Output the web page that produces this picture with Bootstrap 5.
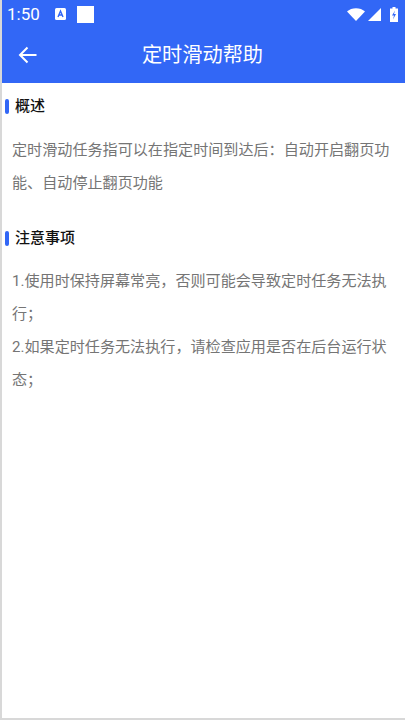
<!DOCTYPE html>
<html lang="zh">
<head>
<meta charset="utf-8">
<title>定时滑动帮助</title>
<link href="https://cdn.jsdelivr.net/npm/bootstrap@5.3.0/dist/css/bootstrap.min.css" rel="stylesheet">
<style>
html,body{height:720px;overflow:hidden}
body{background:#fff;font-family:Roboto,"Noto Sans CJK SC",sans-serif;border-left:2px solid #d8d8d8;border-bottom:2px solid #d8d8d8}
.appbar{background:#3267f6;height:83px;color:#fff}
.statusrow{height:28px;padding:0 7px 0 5px;font-size:17px;line-height:28px}
.status-a{margin-left:15px}
.status-box{margin-left:11px}
.status-wifi{margin-right:3px}
.status-signal{margin-right:9px}
.titlerow{height:54px}
.back-arrow{margin-left:16px}
.pagetitle{font-size:20.2px;font-weight:400;line-height:54px;margin:0 0 0 -37px;text-align:center}
.sec-head{font-size:15px;font-weight:500;color:#111;line-height:22px;padding-left:3px}
.sec-bar{width:4px;height:15px;background:#3267f6;border-radius:2px;margin-right:6px}
.sec-one{margin-top:12px}
.sec-two{margin-top:28px}
.bodytext{font-size:15.1px;line-height:32.7px;color:#757575;padding:0 10px;margin:0}
.firsttext{margin-top:17px}
.secondtext{margin-top:16px}
</style>
</head>
<body>
<header class="appbar">
  <div class="statusrow d-flex align-items-center">
    <span>1:50</span>
    <svg class="status-a" width="11" height="12" viewBox="0 0 11 12"><rect width="11" height="12" rx="1.5" fill="#fff"/><path d="M3 9 5.5 3 8 9M4 7h3" stroke="#3267f6" stroke-width="1.4" fill="none"/></svg>
    <svg class="status-box" width="17" height="17" viewBox="0 0 17 17"><rect width="17" height="17" fill="#fff"/></svg>
    <svg class="status-wifi ms-auto" width="18" height="13" viewBox="0 0 18 13"><path d="M0 3.500C4.500-1 13.500-1 18 3.500L9 13Z" fill="#fff"/></svg>
    <svg class="status-signal" width="13" height="13" viewBox="0 0 13 13"><path d="M13 0V13H0Z" fill="#fff"/></svg>
    <svg width="8" height="15" viewBox="0 0 8 15"><path d="M2.500 0h3v1.500H8V15H0V1.500h2.500Z" fill="#fff"/><path d="M5 3.500 2 8.500h2l-1 4 3-5.500H4Z" fill="#3267f6"/></svg>
  </div>
  <div class="titlerow d-flex align-items-center">
    <svg class="back-arrow" width="19" height="18" viewBox="0 0 19 18"><path d="M18.500 9H2M9.500 1.500 2 9l7.500 7.500" stroke="#fff" stroke-width="2" fill="none"/></svg>
    <h1 class="pagetitle flex-grow-1">定时滑动帮助</h1>
  </div>
</header>
<main>
  <div class="sec-head sec-one d-flex align-items-center"><span class="sec-bar"></span>概述</div>
  <p class="bodytext firsttext">定时滑动任务指可以在指定时间到达后：自动开启翻页功能、自动停止翻页功能</p>
  <div class="sec-head sec-two d-flex align-items-center"><span class="sec-bar"></span>注意事项</div>
  <p class="bodytext secondtext">1.使用时保持屏幕常亮，否则可能会导致定时任务无法执行；</p>
  <p class="bodytext">2.如果定时任务无法执行，请检查应用是否在后台运行状态；</p>
</main>
<script src="https://cdn.jsdelivr.net/npm/bootstrap@5.3.0/dist/js/bootstrap.bundle.min.js"></script>
</body>
</html>
